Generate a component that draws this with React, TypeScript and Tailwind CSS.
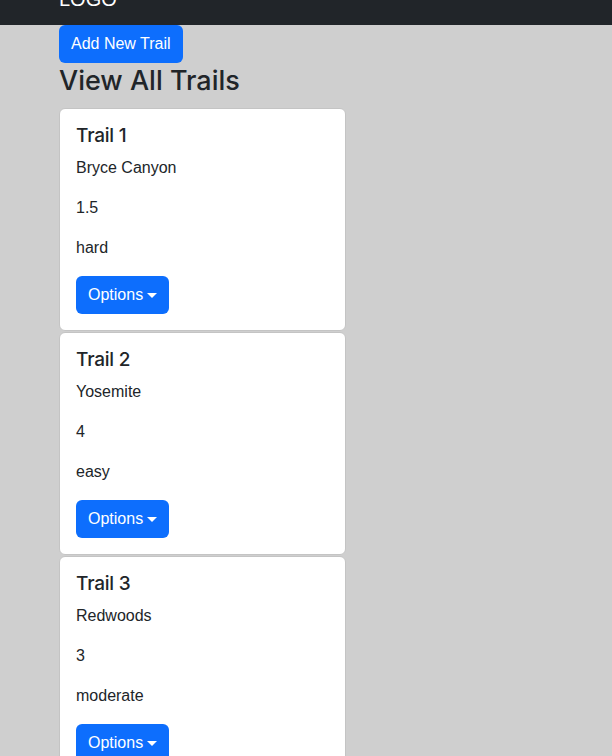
import React from 'react';

const trails = [
  { name: 'Trail 1', location: 'Bryce Canyon', length: '1.5', difficulty: 'hard' },
  { name: 'Trail 2', location: 'Yosemite', length: '4', difficulty: 'easy' },
  { name: 'Trail 3', location: 'Redwoods', length: '3', difficulty: 'moderate' },
];

const TrailCard: React.FC<{ trail: (typeof trails)[number] }> = ({ trail }) => (
  <div className="w-[287px] bg-white border border-[#c4c4c4] rounded-[6px] mb-[1px]">
    <div className="px-4 pt-[15px] pb-4">
      <h5 className="font-['Inter',sans-serif] text-[19px] leading-[24px] font-medium mb-2 tracking-[-0.2px]">{trail.name}</h5>
      <p className="text-base leading-6 mb-4">{trail.location}</p>
      <p className="text-base leading-6 mb-4">{trail.length}</p>
      <p className="text-base leading-6 mb-4">{trail.difficulty}</p>
      <button className="h-[38px] px-3 bg-[#0d6efd] text-white text-base rounded-[6px] flex items-center">
        Options
        <span className="ml-[4px] w-0 h-0 border-t-[5px] border-t-white border-x-[5px] border-x-transparent" />
      </button>
    </div>
  </div>
);

export default function App() {
  return (
    <div className="min-h-screen bg-[#cfcfcf] text-[#212529] font-['Liberation_Sans',Arial,sans-serif]">
      {/* Navbar (scrolled, only the bottom shows) */}
      <nav className="h-[25px] bg-[#212529] overflow-hidden">
        <div className="pl-[59px] -mt-[16px] text-white text-[20px] leading-[30px]">LOGO</div>
      </nav>

      <div className="pl-[59px]">
        <button className="h-[38px] px-3 bg-[#0d6efd] text-white text-base rounded-[6px]">
          Add New Trail
        </button>
        <h2 className="font-['Inter',sans-serif] text-[27px] leading-[32px] font-medium mt-[2px] mb-[11px]">View All Trails</h2>
        <div className="flex flex-col">
          {trails.map((t) => (
            <TrailCard key={t.name} trail={t} />
          ))}
        </div>
      </div>
    </div>
  );
}
